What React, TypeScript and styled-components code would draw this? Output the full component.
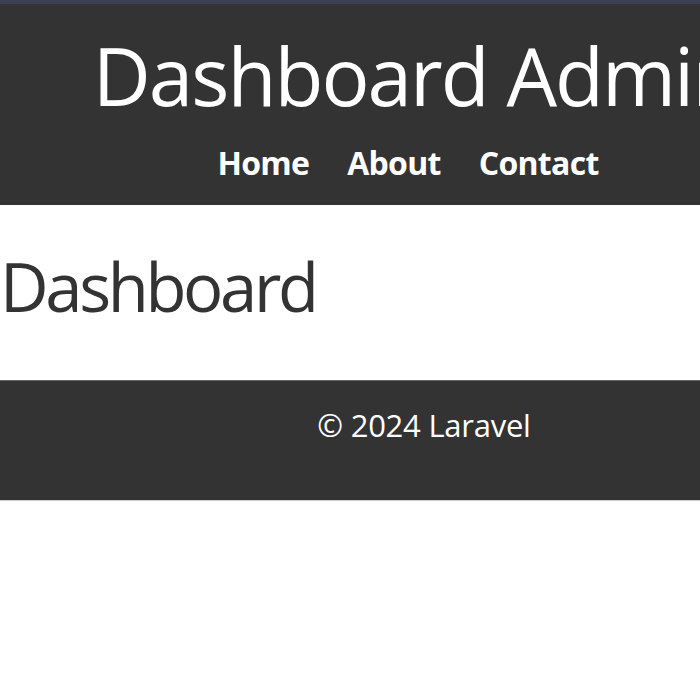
import React from "react";
import styled, { createGlobalStyle } from "styled-components";

const Global = createGlobalStyle`
  html, body {
    margin: 0;
    padding: 0;
    background: #ffffff;
    overflow: hidden;
  }
  body {
    font-family: "Open Sans", "Noto Sans", sans-serif;
  }
`;

const Page = styled.div`
  width: 848px;
  display: flex;
  flex-direction: column;
`;

const Header = styled.header`
  background: #333333;
  border-top: 4px solid #3b4150;
  padding: 31px 0 26px;
  display: flex;
  flex-direction: column;
  align-items: center;
`;

const Title = styled.h1`
  margin: 0 16px 0 0;
  color: #ffffff;
  font-size: 80px;
  font-weight: 400;
  line-height: 1;
  letter-spacing: -0.025em;
  white-space: nowrap;
`;

const Nav = styled.nav`
  margin-top: 32px;
  display: flex;
  gap: 38px;
  margin-right: 32px;
`;

const NavLink = styled.a`
  color: #ffffff;
  font-size: 32px;
  font-weight: 700;
  line-height: 1;
  letter-spacing: -0.022em;
  text-decoration: none;
`;

const Main = styled.main`
  padding: 48px 0 60px;
`;

const Heading = styled.h2`
  margin: 0;
  color: #333333;
  font-size: 67px;
  font-weight: 400;
  line-height: 1;
  letter-spacing: -0.05em;
`;

const Footer = styled.footer`
  background: #333333;
  border-top: 1px solid #666666;
  border-bottom: 1px solid #cccccc;
  padding: 29px 0 59px;
  display: flex;
  justify-content: center;
`;

const FooterText = styled.p`
  margin: 0;
  color: #ffffff;
  font-size: 31px;
  line-height: 1;
  letter-spacing: -0.008em;
`;

export default function App() {
  return (
    <>
      <Global />
      <Page>
        <Header>
          <Title>Dashboard Admin</Title>
          <Nav>
            <NavLink href="#">Home</NavLink>
            <NavLink href="#">About</NavLink>
            <NavLink href="#">Contact</NavLink>
          </Nav>
        </Header>
        <Main>
          <Heading>Dashboard</Heading>
        </Main>
        <Footer>
          <FooterText>© 2024 Laravel</FooterText>
        </Footer>
      </Page>
    </>
  );
}
